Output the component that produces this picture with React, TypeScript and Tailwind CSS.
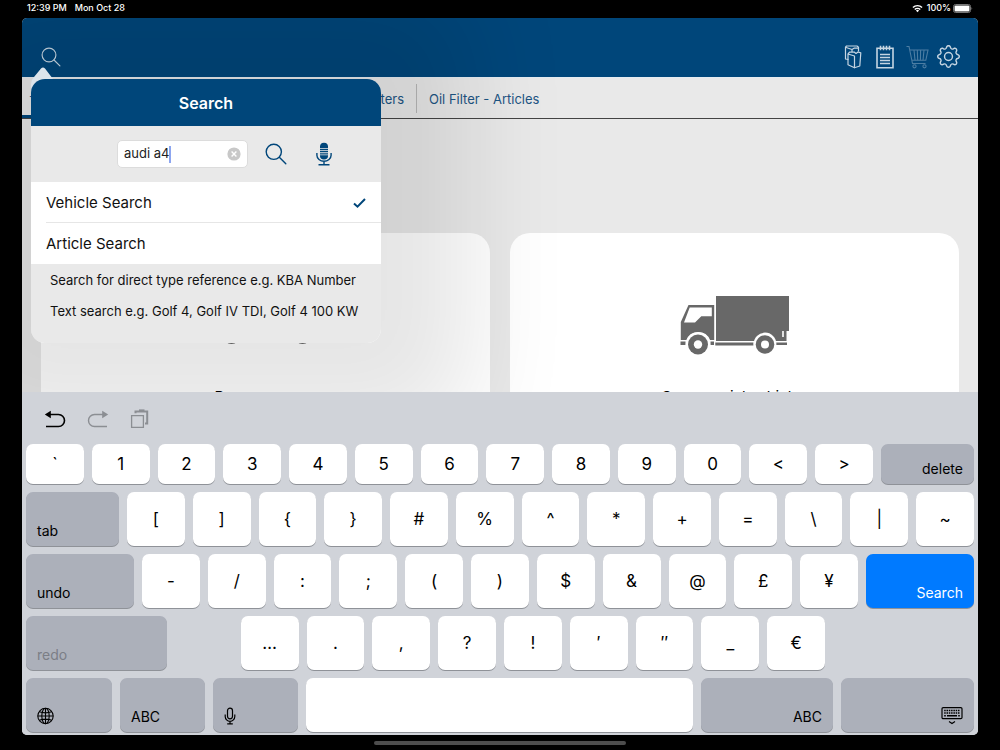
import { useState } from "react";
import { BsGear } from "react-icons/bs";

type KeyProps = {
    label: string;
    wide?: string;
    align?: "left" | "right";
    tone?: "light" | "dark" | "primary";
    disabled?: boolean;
    children?: React.ReactNode;
};

const numberRow = ["`", "1", "2", "3", "4", "5", "6", "7", "8", "9", "0", "<", ">"];
const bracketRow = ["[", "]", "{", "}", "#", "%", "^", "*", "+", "=", "\\", "|", "~"];
const symbolRow = ["-", "/", ":", ";", "(", ")", "$", "&", "@", "£", "¥"];
const punctuationRow = ["…", ".", ",", "?", "!", "′", "″", "_", "€"];

const searchModes = ["Vehicle Search", "Article Search"];

function SearchIcon({ className }: { className: string }) {
    return (
        <svg viewBox="0 0 22 22" className={className} fill="none" stroke="currentColor" strokeLinecap="round">
            <circle cx="8.8" cy="8.8" r="7.6" />
            <path d="M14.3 14.3 20.8 20.8" />
        </svg>
    );
}

function FilesIcon() {
    return (
        <svg viewBox="0 0 18 24" className="w-[18px] h-6" fill="none" stroke="currentColor" strokeWidth="1.2" strokeLinejoin="round">
            <path d="M4.5 14.5 1.5 14V2.2L2.5 1H13L14.5 2.2V6.5" />
            <path d="M1.5 2.2 8 4.5V7M8 4.5 10 3.2H14.5" />
            <path d="M4 9 10.5 11V22.8L4 19.8Z" />
            <path d="M4 9 5.5 7.2H10.5L12 8.5 14 7 16.8 7.8 15.8 21 10.5 22.8" />
        </svg>
    );
}

function NotepadIcon() {
    return (
        <svg viewBox="0 0 18 24" className="w-[18px] h-6" fill="none" stroke="currentColor" strokeWidth="1.6">
            <path d="M1 3.2H17V22.8H1Z" />
            <path d="M4.5 .8V5.2M7.5 .8V5.2M10.5 .8V5.2M13.5 .8V5.2" />
            <path d="M4 9.5H14M4 12.5H14M4 15.5H14M4 18.5H14" />
        </svg>
    );
}

function CartIcon() {
    return (
        <svg viewBox="0 0 23 24" className="w-[23px] h-6" fill="none" stroke="currentColor" strokeWidth="1.1">
            <path d="M.5 1.5H3L6.5 18.5H19.5" />
            <path d="M3.9 5H22L19.8 15.3H6" />
            <path d="M8 5 9 15.3M11.3 5 11.7 15.3M14.6 5 14.4 15.3M18 5 17 15.3" />
            <circle cx="8.5" cy="21.3" r="1.6" />
            <circle cx="18.5" cy="21.3" r="1.6" />
        </svg>
    );
}

function MicIcon() {
    return (
        <svg viewBox="0 0 16 24" className="w-4 h-6 text-[#00467a]" fill="none" stroke="currentColor" strokeWidth="1.4">
            <path d="M4 6.2V4.6A4 3.8 0 0 1 12 4.6V6.2ZM4 13.2V14A4 3.4 0 0 0 12 14V13.2Z" fill="currentColor" stroke="none" />
            <path d="M4 7.6H12M4 9.7H12M4 11.8H12" strokeWidth="1.2" />
            <path d="M.9 11V13.2A7.1 6 0 0 0 15.1 13.2V11M8 19V22.6M2.5 22.8H13.5" />
        </svg>
    );
}

function Truck() {
    return (
        <svg viewBox="0 0 110 60" className="w-[110px] h-[60px]" fill="#686868">
            <path d="M36 1H109V36H106.5V46H88.8A12 12 0 0 0 74.5 46H36Z" />
            <path d="M103 36V42" stroke="#fff" strokeWidth="1.6" />
            <path d="M35.3 47.5H73.5V50.5H35.3ZM96 47.5H107V50H96Z" />
            <path d="M8.5 10H34.2V45H30A12.6 12.6 0 0 0 6.5 45H.8V27Z" />
            <path d="M.5 46.5H5.5V50H.5ZM30.5 46.5H34V50H30.5Z" />
            <path d="M9.7 12.4H31.8V21.2H21.3L15 27.5H4Z" fill="#fff" />
            <circle cx="18" cy="49.5" r="12.2" fill="#fff" />
            <circle cx="85" cy="49" r="11.4" fill="#fff" />
            <circle cx="18" cy="49.5" r="10" />
            <circle cx="85" cy="49.5" r="9.3" />
            <circle cx="18" cy="49.5" r="4.2" fill="#fff" />
            <circle cx="85" cy="49.5" r="4" fill="#fff" />
        </svg>
    );
}

function Car() {
    return (
        <svg viewBox="0 0 110 60" className="w-[110px] h-[60px]" fill="#686868">
            <path d="M4 38V24L24 20 38 6H76L92 20 106 24V38Z" />
            <circle cx="20.5" cy="41" r="8" />
            <circle cx="91.5" cy="41" r="8" />
        </svg>
    );
}

function Key({ label, wide = "flex-1", align, tone = "light", disabled, children }: KeyProps) {
    const tones = {
        light: "bg-white text-black",
        dark: "bg-[#acb0ba] text-black",
        primary: "bg-[#007aff] text-white",
    };
    const place = align
        ? `items-end px-[11px] pb-[7px] text-sm leading-4 ${align === "left" ? "justify-start" : "justify-end"}`
        : "items-center justify-center pt-px text-[17px]";

    return (
        <button
            type="button"
            aria-label={label}
            disabled={disabled}
            className={`${wide} min-w-0 flex rounded-[7px] shadow-[0_1px_0_#8f9298] disabled:text-[#7b7e86] ${tones[tone]} ${place}`}
        >
            {children ?? label}
        </button>
    );
}

function Keyboard() {
    return (
        <section aria-label="Keyboard" className="relative z-20 bg-[#d0d3d9] px-1 pb-[3px]">

            {/* Shortcut bar */}
            <div className="h-[52px] flex items-center gap-[21px] pl-[18px] pt-px">
                <button type="button" aria-label="Undo">
                    <svg viewBox="0 0 22 20" className="w-[22px] h-5" fill="none" stroke="currentColor" strokeWidth="1.6">
                        <path d="M4 5.5H14.5A6 6 0 0 1 14.5 17.5H2" />
                        <path d="M.8 5.5 6.8 1.8V9.2Z" fill="currentColor" stroke="none" />
                    </svg>
                </button>
                <button type="button" aria-label="Redo" disabled className="text-[#8b8e93]">
                    <svg viewBox="0 0 22 20" className="w-[22px] h-5" fill="none" stroke="currentColor" strokeWidth="1.4">
                        <path d="M18 5.5H7.5A6 6 0 0 0 7.5 17.5H20" />
                        <path d="M21.2 5.5 15.2 1.8V9.2Z" fill="currentColor" stroke="none" />
                    </svg>
                </button>
                <button type="button" aria-label="Paste" disabled className="text-[#8b8e93]">
                    <svg viewBox="0 0 20 20" className="w-5 h-5" fill="none" stroke="currentColor" strokeWidth="1.3">
                        <path d="M1.6 6.6H13.4V18.4H1.6Z" />
                        <path d="M5.5 4.2V2.6H17.2V14.4H15" strokeWidth="2" />
                        <path d="M9 1.6H14.5" strokeWidth="2.4" />
                    </svg>
                </button>
            </div>

            <div className="flex flex-col gap-2">
                <div className="h-10 flex gap-2">
                    {numberRow.map((k) => <Key key={k} label={k} />)}
                    <Key label="delete" wide="w-[93px]" align="right" tone="dark" />
                </div>
                <div className="h-[54px] flex gap-2">
                    <Key label="tab" wide="w-[93px]" align="left" tone="dark" />
                    {bracketRow.map((k) => <Key key={k} label={k} />)}
                </div>
                <div className="h-[54px] flex gap-2">
                    <Key label="undo" wide="w-[108px]" align="left" tone="dark" />
                    {symbolRow.map((k) => <Key key={k} label={k} />)}
                    <Key label="Search" wide="w-[108px]" align="right" tone="primary" />
                </div>
                <div className="h-[54px] flex gap-2">
                    <Key label="redo" wide="w-[141px]" align="left" tone="dark" disabled />
                    <div className="flex-1" />
                    {punctuationRow.map((k) => <Key key={k} label={k} />)}
                    <div className="w-[141px]" />
                </div>
                <div className="h-[54px] flex gap-2">
                    <Key label="Next keyboard" wide="w-[86px]" align="left" tone="dark">
                        <svg viewBox="0 0 18 18" className="w-[18px] h-[18px]" fill="none" stroke="currentColor" strokeWidth="1.1">
                            <circle cx="8.5" cy="9" r="7.7" />
                            <ellipse cx="8.5" cy="9" rx="3.7" ry="7.7" />
                            <path d="M8.5 1.3V16.7M.8 9H16.2M2.3 4.8Q8.5 7 14.7 4.8M2.3 13.2Q8.5 11 14.7 13.2" />
                        </svg>
                    </Key>
                    <Key label="ABC" wide="w-[85px]" align="left" tone="dark" />
                    <Key label="Dictate" wide="w-[85px]" align="left" tone="dark">
                        <svg viewBox="0 0 12 18" className="w-3 h-[18px]" fill="none" stroke="currentColor" strokeWidth="1.2">
                            <rect x="3.5" y="1.2" width="5" height="10.6" rx="2.5" />
                            <path d="M1.2 7.5V9.5A4.8 4.8 0 0 0 10.8 9.5V7.5M6 14.3V16.6M3.2 16.8H8.8" />
                        </svg>
                    </Key>
                    <Key label="Space"> </Key>
                    <Key label="ABC" wide="w-[132px]" align="right" tone="dark" />
                    <Key label="Hide keyboard" wide="w-[133px]" align="right" tone="dark">
                        <svg viewBox="0 0 22 20" className="w-[22px] h-5" fill="none" stroke="currentColor" strokeWidth="1.2">
                            <rect x="1" y="2.6" width="20" height="11" rx="1.2" />
                            <path d="M3.2 5.6H19M3.2 8.1H19" strokeWidth="1.5" strokeDasharray="1.5 .8" />
                            <path d="M3.2 10.8H4.8M6 10.8H16M17.2 10.8H18.8" strokeWidth="1.4" />
                            <path d="M8 16.6 11 18.6 14 16.6" />
                        </svg>
                    </Key>
                </div>
            </div>
        </section>
    );
}

function SearchPopover() {
    const [query, setQuery] = useState("audi a4");
    const [mode, setMode] = useState(searchModes[0]);

    return (
        <div className="absolute z-10 left-[9px] top-[61px] w-[350px] rounded-[14px] shadow-[0_0_100px_90px_rgba(0,0,0,0.1)]">
            <svg viewBox="0 0 30 26" className="absolute left-0 -top-3 w-[30px] h-[26px]" fill="#dce4eb">
                <path d="M0 26V17Q0 13 3 10L10 1.5Q12 -.5 14 1.5L22 12V14H14L4 26Z" />
            </svg>
            <div className="relative rounded-[14px] overflow-hidden bg-[#e9e9e9]">
                <h2 className="h-[47px] flex items-center justify-center bg-[#00467a] text-white text-base font-semibold">
                    Search
                </h2>

                <div className="h-14 flex items-center pl-[86px]">
                    <div className="w-[131px] h-7 flex items-center bg-white border border-[#dcdcdc] rounded-[5px] px-[6px]">
                        <input
                            type="text"
                            aria-label="Search text"
                            value={query}
                            onChange={(e) => setQuery(e.target.value)}
                            className="[field-sizing:content] min-w-0 text-[13px] text-[#222] caret-transparent outline-none"
                        />
                        <span className="w-[2px] h-[17px] bg-[#8da6f0]" />
                        <button type="button" aria-label="Clear" onClick={() => setQuery("")} className="ml-auto">
                            <svg viewBox="0 0 14 14" className="w-[14px] h-[14px]">
                                <circle cx="7" cy="7" r="6.6" fill="#c8c8c8" />
                                <path d="M4.6 4.6 9.4 9.4M9.4 4.6 4.6 9.4" stroke="#fff" strokeWidth="1.4" />
                            </svg>
                        </button>
                    </div>
                    <button type="button" aria-label="Search" className="ml-[17px] text-[#00467a]">
                        <SearchIcon className="w-[22px] h-[22px] stroke-[1.4]" />
                    </button>
                    <button type="button" aria-label="Voice search" className="ml-[29px]">
                        <MicIcon />
                    </button>
                </div>

                <div className="bg-white pl-[15px] divide-y divide-[#e6e6e6]">
                    {searchModes.map((m) => (
                        <button
                            key={m}
                            type="button"
                            onClick={() => setMode(m)}
                            className="w-full h-[41px] flex items-center justify-between pt-[2px] pr-[15px] text-[15px] text-[#111]"
                        >
                            {m}
                            {m === mode && (
                                <svg viewBox="0 0 13 12" className="w-[13px] h-3 text-[#00467a]" fill="none" stroke="currentColor" strokeWidth="2">
                                    <path d="M1 6.5 4.5 9.7 12 2" />
                                </svg>
                            )}
                        </button>
                    ))}
                </div>

                <div className="px-[19px] pt-[6px] pb-[22px] text-[13px] leading-5 text-[#111] whitespace-nowrap">
                    <p>Search for direct type reference e.g. KBA Number</p>
                    <p className="mt-[11px]">Text search e.g. Golf 4, Golf IV TDI, Golf 4 100 KW</p>
                </div>
            </div>
        </div>
    );
}

export default function App() {
    return (
        <div className="h-screen flex flex-col bg-black px-[22px] font-[Inter,'Liberation_Sans',sans-serif]">

            {/* Status bar */}
            <div className="h-[18px] flex items-center gap-2 px-[5px] pb-[2px] text-[9px] text-white font-medium">
                <span>12:39 PM</span>
                <span>Mon Oct 28</span>
                <svg viewBox="0 0 12 9" className="w-[11px] h-[9px] ml-auto -mr-1" fill="none" stroke="currentColor" strokeWidth="1.5">
                    <path d="M1 3.4A7 7 0 0 1 11 3.4M3 5.6A4.2 4.2 0 0 1 9 5.6" />
                    <path d="M4.3 6.8A2.4 2.4 0 0 1 7.7 6.8L6 8.6Z" fill="currentColor" stroke="none" />
                </svg>
                <span>100%</span>
                <svg viewBox="0 0 20 9" className="w-5 h-[9px] -ml-[6px]">
                    <rect x=".5" y=".5" width="17" height="8" rx="2" fill="none" stroke="#777" />
                    <rect x="1.5" y="1.5" width="15" height="6" rx="1" fill="#fff" />
                    <path d="M18.5 3V6Q20 4.5 18.5 3Z" fill="#777" />
                </svg>
            </div>

            <div className="relative flex-1 min-h-0 flex flex-col rounded-[5px] overflow-hidden bg-[#e9e9e9]">

                {/* Header */}
                <header className="h-[60px] shrink-0 flex items-center border-b border-[#e4ebf1] bg-[#00467a] pt-[18px] pl-[19px] pr-[18px] text-[#c5d5e2]">
                    <button type="button" aria-label="Search">
                        <SearchIcon className="w-5 h-5 stroke-[1.3]" />
                    </button>
                    <div className="ml-auto flex items-center">
                        <button type="button" aria-label="Documents"><FilesIcon /></button>
                        <button type="button" aria-label="Notes" className="ml-[14px]"><NotepadIcon /></button>
                        <button type="button" aria-label="Cart" className="ml-3 text-[#4c7da3]"><CartIcon /></button>
                        <button type="button" aria-label="Settings" className="ml-2"><BsGear className="w-[23px] h-[23px]" /></button>
                    </div>
                </header>

                {/* Tabs */}
                <nav className="h-[41px] shrink-0 flex items-center border-b border-[#444] text-[13px] text-[#1d5584]">
                    <a href="#vehicle" className="w-[330px] h-full flex items-center pl-[7px] border-b-3 border-[#00467a]">-</a>
                    <a href="#filters" className="w-[65px] pr-3 pt-px text-right border-r border-[#b8b8b8] leading-7">Filters</a>
                    <a href="#oil-filter" className="pl-3 pt-px leading-7">Oil Filter - Articles</a>
                </nav>

                {/* Vehicle types */}
                <main className="flex-1 min-h-0 overflow-hidden grid grid-cols-2 gap-5 px-[19px] pt-[114px] text-[15px] leading-6">
                    <a href="#passenger" className="h-60 rounded-[20px] bg-white flex flex-col items-center pt-[62px]">
                        <Car />
                        <span className="mt-[30px]">Passenger car</span>
                    </a>
                    <a href="#commercial" className="h-60 rounded-[20px] bg-white flex flex-col items-center pt-[62px]">
                        <Truck />
                        <span className="mt-[30px]">Commercial vehicles</span>
                    </a>
                </main>

                <SearchPopover />
                <Keyboard />
            </div>

            {/* Home indicator */}
            <div className="h-[15px] flex items-center justify-center">
                <div className="w-[252px] h-1 rounded-full bg-[#4d4d4d]" />
            </div>
        </div>
    );
}
